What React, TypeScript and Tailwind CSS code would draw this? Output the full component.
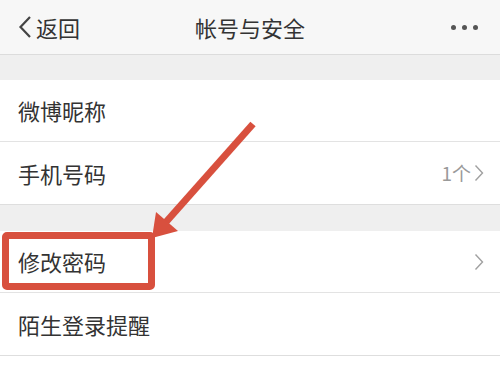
import React from 'react';

const FONT = '"Noto Sans CJK SC", "Noto Sans", sans-serif';

function Chevron({ className }: { className?: string }) {
  return (
    <svg width="10" height="18" viewBox="0 0 10 18" className={className}>
      <path d="M1.5 1.5 L8.5 9 L1.5 16.5" fill="none" stroke="#a0a0a0" strokeWidth="1.4" />
    </svg>
  );
}

function Row({ label, value, arrow, last }: { label: string; value?: string; arrow?: boolean; last?: boolean }) {
  return (
    <div className={`h-[62px] flex items-center pl-[18px] pr-[16px] bg-white ${last ? '' : 'border-b border-[#e3e3e3]'}`}>
      <span className="text-[22px] text-[#333] flex-1">{label}</span>
      {value && <span className="text-[19px] text-[#9a9a9a] mr-[3px]">{value}</span>}
      {arrow && <Chevron />}
    </div>
  );
}

export default function App() {
  return (
    <div className="relative w-[500px] h-[375px] overflow-hidden bg-white" style={{ fontFamily: FONT }}>
      {/* nav bar */}
      <div className="h-[55px] bg-[#f7f7f7] border-b border-[#dcdcdc] flex items-center px-[18px] relative">
        <div className="flex items-center gap-[4px]">
          <svg width="14" height="24" viewBox="0 0 14 24">
            <path d="M12 2 L2.5 12 L12 22" fill="none" stroke="#444" strokeWidth="2.2" />
          </svg>
          <span className="text-[22px] text-[#333]">返回</span>
        </div>
        <div className="absolute left-0 right-0 text-center text-[22px] text-[#333] pointer-events-none">帐号与安全</div>
        <div className="ml-auto flex gap-[6px] pr-[4px]">
          <span className="w-[5px] h-[5px] rounded-full bg-[#555]" />
          <span className="w-[5px] h-[5px] rounded-full bg-[#555]" />
          <span className="w-[5px] h-[5px] rounded-full bg-[#555]" />
        </div>
      </div>

      <div className="h-[25px] bg-[#efefef]" />
      <div className="border-b border-[#dedede]">
        <Row label="微博昵称" />
        <Row label="手机号码" value="1个" arrow last />
      </div>
      <div className="h-[26px] bg-[#efefef]" />
      <div className="border-b border-[#dedede]">
        <Row label="修改密码" arrow />
        <Row label="陌生登录提醒" last />
      </div>

      {/* annotation: red box */}
      <div className="absolute left-[2px] top-[232px] w-[153px] h-[58px] border-[7px] border-[#d8503e] rounded-[5px]" />

      {/* annotation: arrow */}
      <svg className="absolute left-0 top-0" width="500" height="375" viewBox="0 0 500 375">
        <line x1="253" y1="124" x2="166" y2="222" stroke="#d8503e" strokeWidth="7" strokeLinecap="butt" />
        <polygon points="152,238 156,212 178,231" fill="#d8503e" />
      </svg>
    </div>
  );
}
